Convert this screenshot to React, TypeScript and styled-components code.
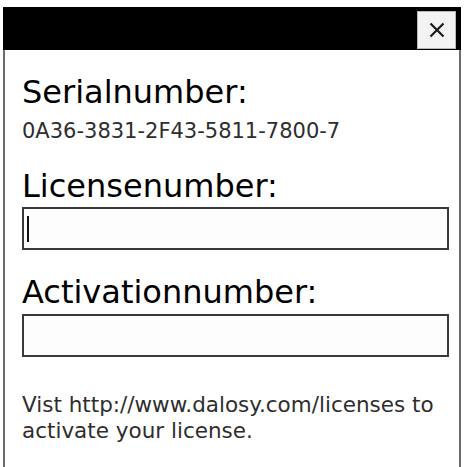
import React from "react";
import styled, { createGlobalStyle } from "styled-components";

const GlobalStyle = createGlobalStyle`
  html, body {
    margin: 0;
    padding: 0;
    background: #ffffff;
    overflow: hidden;
  }
  body {
    font-family: "DejaVu Sans", Verdana, sans-serif;
  }
`;

const Window = styled.div`
  display: flex;
  flex-direction: column;
  width: 458px;
  height: 460px;
  margin: 7px 0 0 3px;
`;

const TitleBar = styled.div`
  display: flex;
  justify-content: flex-end;
  align-items: flex-end;
  height: 43px;
  padding: 4px 5px 1px;
  box-sizing: border-box;
  background: #000000;
`;

const CloseButton = styled.button`
  display: flex;
  align-items: center;
  justify-content: center;
  width: 39px;
  height: 38px;
  padding: 0;
  border: 1px solid #b8b8b8;
  background: #f3f3f3;
  cursor: pointer;
`;

const Panel = styled.div`
  flex: 1;
  display: flex;
  flex-direction: column;
  padding: 24px 10px 0 17px;
  border-left: 2px solid #6c6c6c;
  border-right: 2px solid #6c6c6c;
  background: #ffffff;
`;

const Heading = styled.div<{ $gap?: number }>`
  font-size: 32px;
  line-height: 36px;
  color: #000000;
  margin-top: ${(p) => p.$gap ?? 0}px;
`;

const Value = styled.div`
  font-size: 21px;
  line-height: 26px;
  color: #2e2e2e;
  margin-top: 8px;
`;

const Field = styled.div<{ $gap: number }>`
  display: flex;
  align-items: center;
  height: 43px;
  box-sizing: border-box;
  margin-top: ${(p) => p.$gap}px;
  padding-left: 3px;
  border: 2px solid #3a3a3a;
  background: #fdfdfd;
`;

const Caret = styled.span`
  display: block;
  width: 2px;
  height: 26px;
  background: #111111;
`;

const Note = styled.p`
  margin: 35px 0 0;
  font-size: 21.5px;
  line-height: 26px;
  color: #2e2e2e;
`;

const App = () => {
  return (
    <>
      <GlobalStyle />
      <Window>
        <TitleBar>
          <CloseButton aria-label="Close">
            <svg width="16" height="16" viewBox="0 0 16 16">
              <path d="M1.5 1.5 L14.5 14.5 M14.5 1.5 L1.5 14.5" stroke="#1a1a1a" strokeWidth="2.2" fill="none" />
            </svg>
          </CloseButton>
        </TitleBar>
        <Panel>
          <Heading>Serialnumber:</Heading>
          <Value>0A36-3831-2F43-5811-7800-7</Value>

          <Heading $gap={24}>Licensenumber:</Heading>
          <Field $gap={3}>
            <Caret />
          </Field>

          <Heading $gap={24}>Activationnumber:</Heading>
          <Field $gap={4} />

          <Note>
            Vist http://www.dalosy.com/licenses to activate your license.
          </Note>
        </Panel>
      </Window>
    </>
  );
};

export default App;
